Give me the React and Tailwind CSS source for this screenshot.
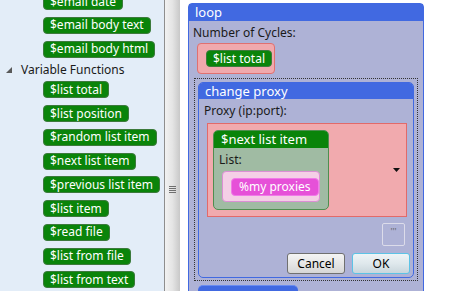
import React from "react";

function Pill({ children }) {
  return (
    <div className="inline-flex items-center h-[17px] px-[6px] rounded-[4px] bg-[#0a840a] border border-[#3c7a3c] text-white text-[12px] leading-none whitespace-nowrap">
      {children}
    </div>
  );
}

function PillRow({ children }) {
  return (
    <div className="ml-[43px] mb-[6.75px] flex">
      <Pill>{children}</Pill>
    </div>
  );
}

export default function App() {
  return (
    <div className="w-[474px] h-[291px] overflow-hidden flex bg-white font-['Noto_Sans',sans-serif] text-[12px] text-[#1a1a1a]">
      {/* Left list */}
      <div className="w-[164px] shrink-0 bg-[#e3edf8] overflow-hidden">
        <div className="flex flex-col -mt-[7px]">
          <PillRow>$email date</PillRow>
          <PillRow>$email body text</PillRow>
          <PillRow>$email body html</PillRow>
          <div className="-mt-[3px] mb-[2px] h-[18px] flex items-center">
            <svg width="6" height="6" viewBox="0 0 6 6" className="ml-[6px] mr-[9px]">
              <path d="M6 0 L6 6 L0 6 Z" fill="#595959" />
            </svg>
            <span className="leading-none">Variable Functions</span>
          </div>
          <PillRow>$list total</PillRow>
          <PillRow>$list position</PillRow>
          <PillRow>$random list item</PillRow>
          <PillRow>$next list item</PillRow>
          <PillRow>$previous list item</PillRow>
          <PillRow>$list item</PillRow>
          <PillRow>$read file</PillRow>
          <PillRow>$list from file</PillRow>
          <PillRow>$list from text</PillRow>
        </div>
      </div>

      {/* Scrollbar thumb */}
      <div className="w-[16px] shrink-0 border-l border-[#8e8e8e] bg-gradient-to-r from-[#f2f2f2] via-[#e4e4e4] to-[#c8c8c8] flex flex-col items-center pt-[186px]">
        <div className="w-[7px] flex flex-col gap-[1px]">
          <div className="h-[1px] bg-[#6f6f6f]" />
          <div className="h-[1px] bg-[#6f6f6f]" />
          <div className="h-[1px] bg-[#6f6f6f]" />
          <div className="h-[1px] bg-[#6f6f6f]" />
        </div>
      </div>

      {/* Canvas */}
      <div className="flex-1 bg-white pl-[8px] pt-[3px] overflow-hidden">
        <div className="w-[236px] border border-[#4169e1] rounded-t-[4px] bg-[#aeb2d6] h-[320px]">
          <div className="h-[17px] bg-[#4169e1] text-white text-[13px] leading-[17px] px-[6px]">loop</div>
          <div className="pt-[4px]">
            <div className="pl-[4px] h-[16px] leading-[16px]">Number of Cycles:</div>
            <div className="mt-[2px] ml-[8px] w-[78px] h-[31px] rounded-[4px] bg-[#f0a9ad] border border-[#e07070] flex items-center pl-[8px]">
              <Pill>$list total</Pill>
            </div>

            {/* selected block */}
            <div className="mt-[4px] ml-[5px] w-[224px] border border-dotted border-[#333333] pt-[3px] pl-[3px] pr-[2px] pb-[2px]">
              <div className="w-[216px] h-[196px] border border-[#4169e1] rounded-[5px] overflow-hidden flex flex-col">
                <div className="h-[16px] bg-[#4169e1] text-white text-[13px] leading-[16px] px-[6px]">change proxy</div>
                <div className="flex-1 flex flex-col pt-[4px]">
                  <div className="pl-[5px] h-[16px] leading-[16px]">Proxy (ip:port):</div>
                  <div className="mt-[4px] ml-[8px] w-[200px] h-[94px] bg-[#f1aaae] border border-[#e26a6a] flex items-center pl-[5px]">
                    <div className="w-[116px] h-[80px] rounded-[5px] border border-[#4f8e4f] bg-[#a0bba3] overflow-hidden flex flex-col">
                      <div className="h-[17px] bg-[#0a840a] text-white text-[13px] leading-[17px] px-[7px]">$next list item</div>
                      <div className="pl-[5px] pt-[4px] h-[20px] leading-[16px]">List:</div>
                      <div className="mt-[3px] ml-[8px] w-[98px] h-[31px] rounded-[4px] bg-[#f4cfe6] border border-[#db8fd4] flex items-center pl-[8px]">
                        <div className="inline-flex items-center h-[18px] px-[7px] rounded-[4px] bg-[#e651d8] border border-[#f07ae8] text-white text-[12px] leading-none whitespace-nowrap">
                          %my proxies
                        </div>
                      </div>
                    </div>
                    <div className="flex-1" />
                    <svg width="7" height="4" viewBox="0 0 7 4" className="mr-[6px]">
                      <path d="M0 0 L7 0 L3.5 4 Z" fill="#111111" />
                    </svg>
                  </div>
                  <div className="mt-[6px] flex justify-end pr-[8px]">
                    <div className="w-[23px] h-[23px] rounded-[2px] border border-[#dcdcea] flex justify-center pt-[3px] text-[9px] leading-none text-[#666666]">
                      '''
                    </div>
                  </div>
                  <div className="mt-[7px] flex justify-end gap-[7px] pr-[3px]">
                    <div className="w-[58px] h-[21px] rounded-[3px] border border-[#707070] bg-gradient-to-b from-[#f4f4f4] via-[#e6e6e6] to-[#d6d6d6] flex items-center justify-center text-[12px] text-black">
                      Cancel
                    </div>
                    <div className="w-[58px] h-[21px] rounded-[3px] border border-[#5cc3e6] bg-gradient-to-b from-[#eef4f6] via-[#dfe8ec] to-[#c9d6dc] flex items-center justify-center text-[12px] text-black">
                      OK
                    </div>
                  </div>
                </div>
              </div>
            </div>

            <div className="mt-[4px] ml-[9px] w-[100px] h-[20px] rounded-t-[5px] bg-[#4169e1] border-t border-[#6a8cf0]" />
          </div>
        </div>
      </div>
    </div>
  );
}
